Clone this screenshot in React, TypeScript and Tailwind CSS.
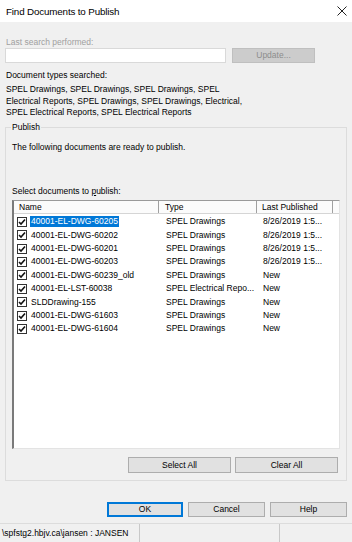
import React from "react"

const rows = [
  { name: "40001-EL-DWG-60205", type: "SPEL Drawings", last: "8/26/2019 1:5..." },
  { name: "40001-EL-DWG-60202", type: "SPEL Drawings", last: "8/26/2019 1:5..." },
  { name: "40001-EL-DWG-60201", type: "SPEL Drawings", last: "8/26/2019 1:5..." },
  { name: "40001-EL-DWG-60203", type: "SPEL Drawings", last: "8/26/2019 1:5..." },
  { name: "40001-EL-DWG-60239_old", type: "SPEL Drawings", last: "New" },
  { name: "40001-EL-LST-60038", type: "SPEL Electrical Repo...", last: "New" },
  { name: "SLDDrawing-155", type: "SPEL Drawings", last: "New" },
  { name: "40001-EL-DWG-61603", type: "SPEL Drawings", last: "New" },
  { name: "40001-EL-DWG-61604", type: "SPEL Drawings", last: "New" },
]

function CheckBox() {
  return (
    <div className="w-[10px] h-[10px] border border-[#333333] bg-white flex items-center justify-center shrink-0">
      <svg width="8" height="8" viewBox="0 0 8 8">
        <path d="M1 4 L3 6 L7 1.5" fill="none" stroke="#111" strokeWidth="1.6" />
      </svg>
    </div>
  )
}

function Button({ label, className = "", disabled = false, primary = false }: { label: string; className?: string; disabled?: boolean; primary?: boolean }) {
  return (
    <div
      className={`flex items-center justify-center border ${
        disabled
          ? "bg-[#cccccc] border-[#bfbfbf] text-[#8c8c8c]"
          : primary
            ? "bg-[#e1e1e1] border-[#0078d7] outline outline-1 -outline-offset-2 outline-[#0078d7] text-black"
            : "bg-[#e1e1e1] border-[#adadad] text-black"
      } ${className}`}
    >
      {label}
    </div>
  )
}

export default function App() {
  return (
    <div
      className="w-[352px] h-[542px] bg-[#f0f0f0] flex flex-col text-[8.5px] leading-[11px] text-black overflow-hidden"
      style={{ fontFamily: '"Liberation Sans", Arial, sans-serif' }}
    >
      {/* Title bar */}
      <div className="h-[22px] bg-white flex items-center justify-between pl-[6px] pr-[5px] shrink-0">
        <span className="text-[9.8px] tracking-[-0.15px] text-black">Find Documents to Publish</span>
        <svg width="10" height="10" viewBox="0 0 10 10">
          <path d="M0.5 0.5 L9.5 9.5 M9.5 0.5 L0.5 9.5" stroke="#222" strokeWidth="1" />
        </svg>
      </div>

      <div className="px-[5px] flex flex-col">
        <div className="mt-[15px] h-[11px] pl-[1px] text-[#a0a0a0]">Last search performed:</div>
        <div className="flex h-[15px] gap-[6px]">
          <div className="w-[221px] h-full bg-white border border-[#d9d9d9]" />
          <Button label="Update..." disabled className="w-[83px] h-full" />
        </div>

        <div className="mt-[7px] h-[11px] pl-[1px]">Document types searched:</div>
        <p className="mt-[3px] pl-[1px] leading-[11.7px] w-[248px]">
          SPEL Drawings, SPEL Drawings, SPEL Drawings, SPEL Electrical Reports, SPEL Drawings, SPEL Drawings, Electrical, SPEL
          Electrical Reports, SPEL Electrical Reports
        </p>

        {/* Publish group */}
        <fieldset className="mt-[3px] border border-[#dcdcdc] pl-[6px] pr-[6px] pb-[7px]">
          <legend className="-ml-[1px] px-[1px] h-[11px]">Publish</legend>
          <div className="mt-[9px] h-[11px]">The following documents are ready to publish.</div>
          <div className="mt-[33px] h-[11px]">
            Select documents to <span className="underline">p</span>ublish:
          </div>

          {/* List */}
          <div className="mt-[3px] h-[249px] bg-white border-l-2 border-t border-r border-b border-l-[#7a7a7a] border-t-[#9a9a9a] border-r-[#e3e3e3] border-b-[#e3e3e3] flex flex-col">
            <div className="h-[13px] flex border-b border-[#d5d5d5] bg-[#fbfbfb] shrink-0">
              <div className="w-[145px] border-r border-[#a0a0a0] pl-[5px] flex items-center">Name</div>
              <div className="w-[98px] border-r border-[#a0a0a0] pl-[6px] flex items-center">Type</div>
              <div className="w-[76px] border-r border-[#a0a0a0] pl-[5px] flex items-center">Last Published</div>
              <div className="flex-1" />
            </div>
            <div className="pt-[1px] flex flex-col">
              {rows.map((row, i) => (
                <div key={row.name} className="h-[13.4px] flex items-center">
                  <div className="w-[145px] flex items-center pl-[3px] gap-[3px]">
                    <CheckBox />
                    <span className={i === 0 ? "bg-[#0078d7] text-white px-[1px] h-[11px] flex items-center" : "px-[1px]"}>
                      {row.name}
                    </span>
                  </div>
                  <div className="w-[98px] pl-[7px] whitespace-nowrap">{row.type}</div>
                  <div className="pl-[6px] whitespace-nowrap">{row.last}</div>
                </div>
              ))}
            </div>
          </div>

          <div className="mt-[8px] flex justify-end gap-[4px] pr-[2px]">
            <Button label="Select All" className="w-[103px] h-[16px]" />
            <Button label="Clear All" className="w-[103px] h-[16px]" />
          </div>
        </fieldset>

        <div className="mt-[21px] flex justify-end gap-[5px]">
          <Button label="OK" primary className="w-[76px] h-[15px]" />
          <Button label="Cancel" className="w-[77px] h-[15px]" />
          <Button label="Help" className="w-[77px] h-[15px]" />
        </div>
      </div>

      {/* Status bar */}
      <div className="mt-auto h-[19px] flex border-t border-[#dcdcdc] shrink-0">
        <div className="w-[138px] flex items-center pl-[2px] whitespace-nowrap">\spfstg2.hbjv.ca\jansen : JANSEN</div>
        <div className="w-[139px] border-l border-[#c8c8c8] ml-[1px]" />
        <div className="flex-1 border-l border-[#c8c8c8] ml-[1px]" />
      </div>
    </div>
  )
}
